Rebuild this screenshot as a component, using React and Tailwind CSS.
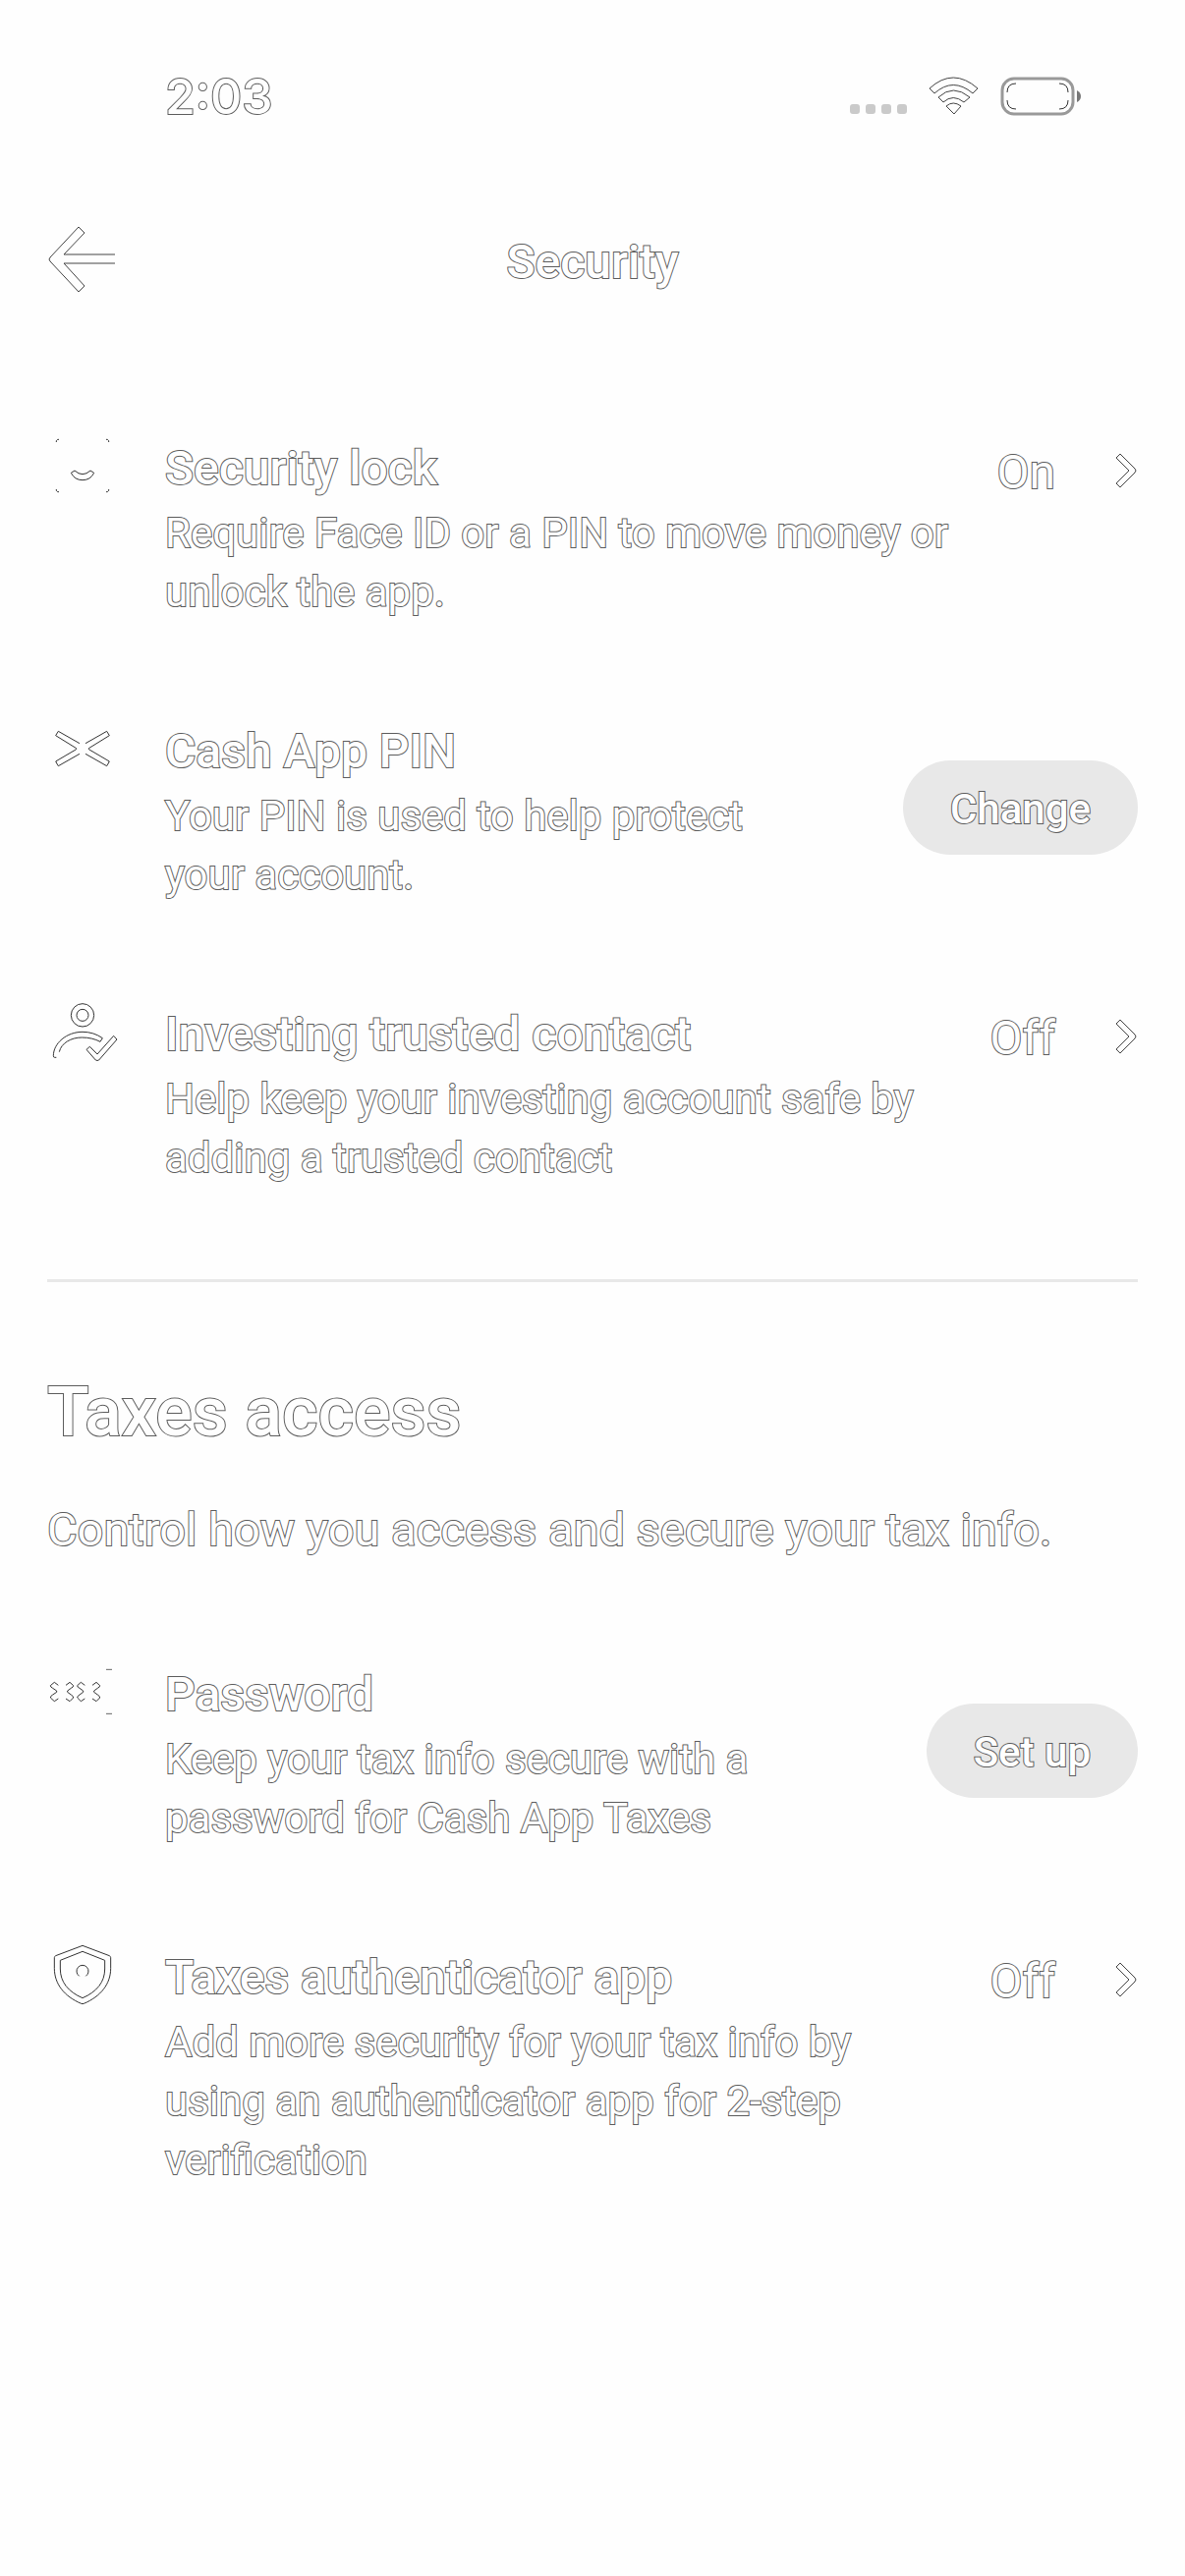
const outline =
  "text-[#fefefe] [-webkit-text-stroke:2px_#5c5c5c] [paint-order:stroke_fill]";

function RowIcon({ viewBox, children }) {
  return (
    <svg
      className="h-[66px] w-[72px] shrink-0"
      viewBox={viewBox}
      fill="none"
      stroke="#333333"
      strokeWidth="3"
      aria-hidden="true"
    >
      {children}
    </svg>
  );
}

const FaceIcon = () => (
  <RowIcon viewBox="54 63 216 198">
    <path d="M82 90v-4l4-4h4M234 82h4l4 4v4M82 234v4l4 4h4M234 242h4l4-4v-4" />
    <path d="M127 184l11-7q24 22 48 0l11 7q-11 22-35 22t-35-22Z" />
  </RowIcon>
);

const PinIcon = () => (
  <RowIcon viewBox="54 27 216 198">
    <path d="M153 110L88 73l-8 13 63 39v3l-63 37 8 14 65-37M171 110l65-37 8 13-63 39v3l63 37-8 14-65-37" />
  </RowIcon>
);

const ContactIcon = () => (
  <RowIcon viewBox="54 51 216 198">
    <circle cx="162" cy="100" r="35" />
    <circle cx="162" cy="100" r="18" />
    <path d="M91 212C97 185 127 168 160 168q32 0 56 13l7-11Q196 151 162 151C113 151 73 186 73 224q0 5 4 5h5" />
    <path d="M174 205l10-9 23 23 50-56 10 11-55 63q-5 3-10 0Z" />
  </RowIcon>
);

const PasswordIcon = () => (
  <RowIcon viewBox="54 57 216 198">
    <path d="M88 136l-12-9-12 10q0 5 7 8l12 8v4l-12 8q-7 4-7 9l12 11 12-8" />
    <path d="M111 136l12-9 11 10q0 5-7 8l-11 8v4l11 8q7 4 7 9l-11 11-12-8" />
    <path d="M169 136l-12-9-11 10q0 5 7 8l11 8v4l-11 8q-7 4-7 9l11 11 12-8" />
    <path d="M192 136l12-9 11 10q0 5-7 8l-11 8v4l11 8q7 4 7 9l-11 11-12-8" />
    <path d="M234 88h18M234 223h18" stroke="#666666" />
  </RowIcon>
);

const ShieldIcon = () => (
  <RowIcon viewBox="54 81 216 198">
    <path d="M162 91l82 31q4 2 4 6v32c0 48-30 86-82 108q-4 2-8 0C106 246 76 208 76 160v-32q0-4 4-6Z" />
    <path d="M162 109l68 27v26c0 40-24 70-68 89-44-19-68-49-68-89v-26Z" />
    <path d="M152 184a18 18 0 1 1 20 0" />
  </RowIcon>
);

function Row({ icon, title, text, value, action }) {
  return (
    <li className="flex items-start">
      {icon}
      <div className="ml-12 min-w-0 flex-1">
        <h3 className={`text-[48px] leading-[72px] font-medium ${outline}`}>{title}</h3>
        <p className={`text-[42px] leading-[60px] ${action ? "max-w-[660px]" : ""} ${outline}`}>{text}</p>
      </div>
      {action ? (
        <button
          type="button"
          className="mt-[45px] h-24 shrink-0 rounded-full bg-[#e8e8e8] px-12 pt-1 text-[42px] leading-[60px] font-medium"
        >
          <span className={outline}>{action}</span>
        </button>
      ) : (
        <button type="button" aria-label={`${title}: ${value}`} className="ml-10 flex h-20 shrink-0 items-center gap-9">
          <span className={`text-[48px] leading-[80px] ${outline}`}>{value}</span>
          <svg className="h-12 w-12" viewBox="0 0 48 48" fill="none" stroke="#444444" aria-hidden="true">
            <path d="M30 5l15 15q2 2 0 4L30 39l-4-4 13-13L26 9Z" />
          </svg>
        </button>
      )}
    </li>
  );
}

function StatusBar() {
  return (
    <div className="flex items-start justify-between pt-[66px] pr-[58px] pl-[120px]">
      <time className={`font-['Inter',sans-serif] text-[50px] leading-[64px] font-medium ${outline}`}>2:03</time>
      <div className="flex h-[63px] items-center">
        <svg className="h-10 w-[58px]" viewBox="0 0 58 40" fill="#cacaca" aria-hidden="true">
          <rect x="0" y="28" width="10" height="10" rx="3" />
          <rect x="16" y="28" width="10" height="10" rx="3" />
          <rect x="32" y="28" width="10" height="10" rx="3" />
          <rect x="48" y="28" width="10" height="10" rx="3" />
        </svg>
        <svg className="ml-[22px] h-10 w-[51px]" viewBox="0 0 51 40" fill="none" stroke="#444444" aria-hidden="true">
          <path d="M1 12Q25 -10 50 12L45 17Q25 0 6 17Z" />
          <path d="M10 21Q25 7 42 21L36 26Q25 17 15 26Z" />
          <path d="M18 30Q25 24 33 30L26 38Z" />
        </svg>
        <svg className="ml-[22px] h-10 w-[82px]" viewBox="0 0 82 40" fill="none" aria-hidden="true">
          <rect x="2" y="2" width="72" height="36" rx="12" stroke="#999999" strokeWidth="3" />
          <path d="M7 16q0-9 9-9M60 7q9 0 9 9M7 24q0 9 9 9M60 33q9 0 9-9" stroke="#333333" />
          <path d="M78 14q4 2 4 6t-4 6Z" fill="#777777" />
        </svg>
      </div>
    </div>
  );
}

export default function App() {
  return (
    <div className="min-h-screen bg-[#fefefe] px-12 pb-10 font-['Roboto',sans-serif]">
      <StatusBar />
      <header className="mt-[101px] grid grid-cols-[1fr_auto_1fr] items-center">
        <button type="button" aria-label="Back" className="h-[72px] w-[72px]">
          <svg className="h-[72px] w-[72px]" viewBox="0 0 72 72" fill="none" stroke="#444444" aria-hidden="true">
            <path d="M69 28H17L38 6L32 0L3 31q-2 2 0 4L32 66l6-6L17 37H69" />
          </svg>
        </button>
        <h1 className={`text-[48px] leading-[72px] font-medium ${outline}`}>Security</h1>
        <span />
      </header>

      <main>
        <ul className="mt-[138px] flex flex-col gap-24">
          <Row
            icon={<FaceIcon />}
            title="Security lock"
            text="Require Face ID or a PIN to move money or unlock the app."
            value="On"
          />
          <Row
            icon={<PinIcon />}
            title="Cash App PIN"
            text="Your PIN is used to help protect your account."
            action="Change"
          />
          <Row
            icon={<ContactIcon />}
            title="Investing trusted contact"
            text="Help keep your investing account safe by adding a trusted contact"
            value="Off"
          />
        </ul>

        <hr className="mt-[93px] border-t-[3px] border-[#e8e8e8]" />

        <section>
          <h2 className={`mt-[90px] text-[70px] leading-[84px] font-medium ${outline}`}>Taxes access</h2>
          <p className={`mt-[42px] text-[47px] leading-[72px] ${outline}`}>
            Control how you access and secure your tax info.
          </p>
          <ul className="mt-24 flex flex-col gap-24">
            <Row
              icon={<PasswordIcon />}
              title="Password"
              text="Keep your tax info secure with a password for Cash App Taxes"
              action="Set up"
            />
            <Row
              icon={<ShieldIcon />}
              title="Taxes authenticator app"
              text="Add more security for your tax info by using an authenticator app for 2-step verification"
              value="Off"
            />
          </ul>
        </section>
      </main>
    </div>
  );
}
